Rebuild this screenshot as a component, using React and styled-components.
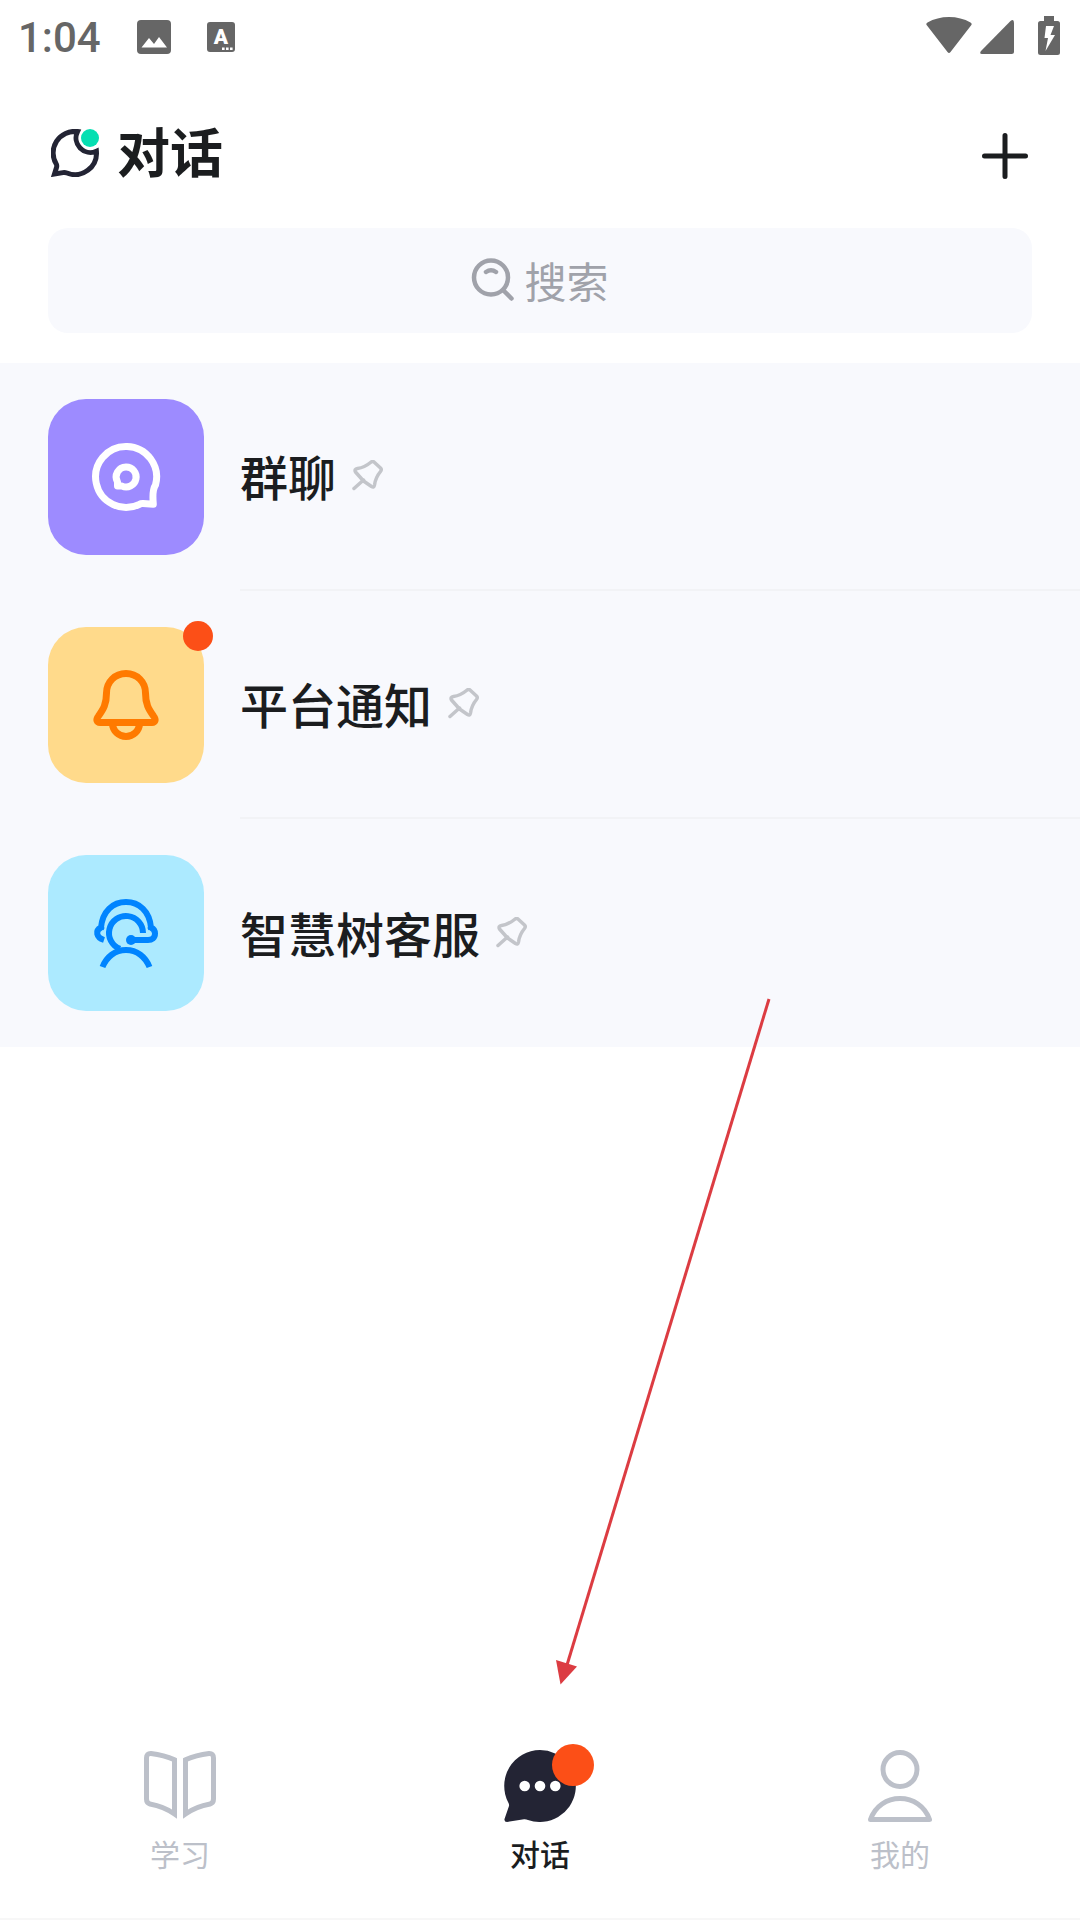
import React from "react";
import styled, { createGlobalStyle } from "styled-components";

const COLORS = {
  text: "#1b1d1f",
  navy: "#232434",
  status: "#666666",
  muted: "#a0a2aa",
  inactive: "#bcc0c9",
  panel: "#f8f9fd",
  line: "#f2f3f6",
  badge: "#fc4f17",
  teal: "#06dfb2",
  arrow: "#dc3c42",
};

const CHATS = [
  { id: "group", title: "群聊", color: "#9d8bff", icon: GroupIcon },
  { id: "notice", title: "平台通知", color: "#ffda8b", icon: BellIcon, unread: true },
  { id: "service", title: "智慧树客服", color: "#aceaff", icon: ServiceIcon },
];

const TABS = [
  { id: "study", label: "学习", icon: BookIcon },
  { id: "chat", label: "对话", icon: BubbleIcon, active: true, unread: true },
  { id: "mine", label: "我的", icon: UserIcon },
];

const App = () => {
  return (
    <Page>
      <GlobalStyle />
      <StatusBar />
      <Header>
        <LogoIcon />
        <Title>对话</Title>
        <AddButton aria-label="新建">
          <svg width="54" height="54" viewBox="0 0 54 54">
            <path
              d="M27 6.500V47.500M6.500 27H47.500"
              stroke={COLORS.text}
              strokeWidth="5"
              strokeLinecap="round"
            />
          </svg>
        </AddButton>
      </Header>
      <SearchBox>
        <SearchIcon />
        <SearchInput type="search" placeholder="搜索" aria-label="搜索" />
      </SearchBox>
      <ChatList>
        {CHATS.map(({ id, title, color, icon: Icon, unread }) => (
          <ChatRow key={id} href={`#${id}`}>
            <Tile $color={color}>
              <Icon />
              {unread && <TileBadge />}
            </Tile>
            <ChatBody>
              <ChatTitle>{title}</ChatTitle>
              <PinIcon />
            </ChatBody>
          </ChatRow>
        ))}
      </ChatList>
      <TabBar>
        {TABS.map(({ id, label, icon: Icon, active, unread }) => (
          <Tab key={id} href={`#${id}`} $active={active}>
            <TabIcon>
              <Icon />
              {unread && <TabBadge />}
            </TabIcon>
            {label}
          </Tab>
        ))}
      </TabBar>
      <Pointer width="230" height="700" viewBox="0 0 230 700" aria-hidden="true">
        <path d="M219 9L17 675" stroke={COLORS.arrow} strokeWidth="3" />
        <path d="M6 670L27 676.500L10.500 694.500Z" fill={COLORS.arrow} />
      </Pointer>
    </Page>
  );
};

function StatusBar() {
  return (
    <StatusWrapper>
      <StatusGroup $gap={36}>
        <Time>1:04</Time>
        <svg width="34" height="34" viewBox="0 0 34 34">
          <rect width="34" height="34" rx="4" fill={COLORS.status} />
          <path d="M4.500 27.500L12 18L17 24L22 17L30 27.500Z" fill="#fff" />
        </svg>
        <svg width="28" height="30" viewBox="0 0 28 30">
          <rect width="28" height="30" rx="3" fill={COLORS.status} />
          <text
            x="14"
            y="22"
            textAnchor="middle"
            fontFamily="Roboto, sans-serif"
            fontWeight="900"
            fontSize="21"
            fill="#fff"
          >
            A
          </text>
          <path d="M15 25.500h2.600v2.600h-2.600zM19 25.500h2.600v2.600h-2.600zM23 25.500h2.600v2.600h-2.600z" fill="#fff" />
        </svg>
      </StatusGroup>
      <StatusGroup $gap={24}>
        <StatusGroup $gap={8}>
          <svg width="46" height="40" viewBox="0 0 46 40">
            <path
              d="M1 8.500C0 7.500 0 6.500 1.500 5.500Q11 0 23 0T44.500 5.500C46 6.500 46 7.500 45 8.500L24.500 35Q23 37 21.500 35Z"
              fill={COLORS.status}
            />
          </svg>
          <svg width="34" height="34" viewBox="0 0 34 34">
            <path d="M30.500 1Q34-1.500 34 3V31.500Q34 34 31.500 34H2Q-1 34 1 31Z" fill={COLORS.status} />
          </svg>
        </StatusGroup>
        <svg width="22" height="42" viewBox="0 0 22 42">
          <path d="M6 0H16V5H19.500Q22 5 22 7.500V36.500Q22 39 19.500 39H2.500Q0 39 0 36.500V7.500Q0 5 2.500 5H6Z" fill={COLORS.status} />
          <path d="M8 10H16L12.500 19H17L7.500 35L10 22H6.500Z" fill="#fff" />
        </svg>
      </StatusGroup>
    </StatusWrapper>
  );
}

function LogoIcon() {
  return (
    <svg width="48" height="48" viewBox="0 0 48 48" fill="none">
      <path
        d="M26.500 2.600A21.500 21.500 0 0 0 5.500 35.500Q6 37 5.500 38.500L3.500 45L12 43.600Q14 43.300 16 44A21.500 21.500 0 0 0 45.400 22.200A14.500 14.500 0 0 1 26.500 2.600Z"
        stroke={COLORS.navy}
        strokeWidth="5"
      />
      <circle cx="39" cy="9" r="9" fill={COLORS.teal} />
    </svg>
  );
}

function SearchIcon() {
  return (
    <svg width="44" height="44" viewBox="0 0 44 44" fill="none" stroke={COLORS.muted} strokeWidth="4.500" strokeLinecap="round">
      <circle cx="20" cy="19.500" r="17" />
      <path d="M32.500 32.500L40.500 40.500M15 14Q20 10.500 25 14" />
    </svg>
  );
}

function GroupIcon() {
  return (
    <svg width="72" height="72" viewBox="0 0 72 72" fill="none" stroke="#fff" strokeWidth="7" strokeLinejoin="round">
      <path d="M49.500 63.300A30.500 30.500 0 1 1 65.500 44Q62 49 63.300 63L63.300 63.200L53 62.500Q51 62.400 49.500 63.300Z" />
      <path d="M36 26A10 10 0 1 1 32 45.100L27.500 45V41A10 10 0 0 1 36 26Z" />
    </svg>
  );
}

function BellIcon() {
  return (
    <svg width="72" height="72" viewBox="0 0 72 72" fill="none" stroke="#ff7a00" strokeWidth="7">
      <path d="M36 4.500C25 4.500 16.500 13 16.500 24C16.500 35 13.500 40 8.500 47C5.500 51 7 53.500 10 53.500H62C65 53.500 66.500 51 63.500 47C58.500 40 55.500 35 55.500 24C55.500 13 47 4.500 36 4.500Z" />
      <path d="M22.500 54C22.500 62 29 67.500 36 67.500S49.500 62 49.500 54" />
    </svg>
  );
}

function ServiceIcon() {
  return (
    <svg width="72" height="72" viewBox="0 0 72 72" fill="none" stroke="#0084ff" strokeWidth="6">
      <path d="M14 43C6 40.500 5 33.500 11 30.500C12.500 14 23 5 36 5S59.500 14 61 30.500Q65 32.500 65 36.500C65 41 62 43 58 43H40" />
      <path d="M10.500 30L14 32M61.500 30L58 32" strokeWidth="3" />
      <path d="M53 36A17 17 0 1 0 30 51.900" />
      <path d="M12.500 70C16.500 60 25 53 36 53S55.500 60 59.500 70" />
      <circle cx="41" cy="43" r="5" fill="#0084ff" stroke="none" />
    </svg>
  );
}

function PinIcon() {
  return (
    <svg width="32" height="32" viewBox="0 0 32 32" fill="none" stroke="#c3c5ca" strokeWidth="3.500" strokeLinecap="round" strokeLinejoin="round">
      <path d="M22 2L28.500 8Q30 9.500 28.500 11.500Q23.500 17.500 22.500 25Q22 28 19.500 26.500L11.500 21L3.500 12Q2 9 5.500 8.500Q12.500 7.500 18.500 2.500Q20.500 0.800 22 2Z" />
      <path d="M11.500 20L2 28.500" />
    </svg>
  );
}

function BookIcon() {
  const page = "M2.500 8Q2.500 3.300 7 3.500Q20 5 30.500 9.800V64Q20 56.500 6 54Q2.500 53 2.500 49Z";
  return (
    <svg width="72" height="72" viewBox="0 0 72 72" fill="none" stroke={COLORS.inactive} strokeWidth="5">
      <path d={page} />
      <path d={page} transform="matrix(-1 0 0 1 72 0)" />
    </svg>
  );
}

function BubbleIcon() {
  return (
    <svg width="72" height="72" viewBox="0 0 72 72" fill={COLORS.navy}>
      <path d="M36 0A36 36 0 1 1 24 70Q22 69 20 69.200L3 72Q0 72 0.500 69L5 56Q5.300 54.500 4.500 53A36 36 0 0 1 36 0Z" />
      <g fill="#fff">
        <circle cx="20.700" cy="36" r="5.300" />
        <circle cx="36" cy="36" r="5.300" />
        <circle cx="51.300" cy="36" r="5.300" />
      </g>
    </svg>
  );
}

function UserIcon() {
  return (
    <svg width="72" height="72" viewBox="0 0 72 72" fill="none" stroke={COLORS.inactive} strokeWidth="5" strokeLinejoin="round">
      <circle cx="36" cy="19.500" r="17" />
      <path d="M6.500 69.500C11 56 23 48.500 36 48.500S61 56 65.500 69.500Z" />
    </svg>
  );
}

const GlobalStyle = createGlobalStyle`
  *, *::before, *::after {
    box-sizing: border-box;
  }

  body {
    margin: 0;
    background: #fff;
    color: ${COLORS.text};
    font-family: "Noto Sans CJK SC", sans-serif;
  }

  svg {
    display: block;
    flex-shrink: 0;
  }
`;

const Page = styled.div`
  position: relative;
  display: flex;
  flex-direction: column;
  min-height: 100vh;
`;

const StatusWrapper = styled.div`
  display: flex;
  align-items: center;
  justify-content: space-between;
  height: 72px;
  padding: 2px 20px 0 18px;
`;

const StatusGroup = styled.div`
  display: flex;
  align-items: center;
  gap: ${(p) => p.$gap}px;
`;

const Time = styled.span`
  padding-top: 2px;
  font-family: Roboto, sans-serif;
  font-size: 42px;
  font-weight: 500;
  line-height: 48px;
  color: ${COLORS.status};
`;

const Header = styled.header`
  display: flex;
  align-items: center;
  height: 156px;
  padding: 6px 48px 0 51px;
`;

const Title = styled.h1`
  margin: 0 auto 0 18px;
  padding-bottom: 6px;
  font-size: 53px;
  font-weight: 700;
  line-height: 72px;
`;

const AddButton = styled.button`
  padding: 6px 0 0;
  border: 0;
  background: none;
`;

const SearchBox = styled.label`
  display: flex;
  align-items: center;
  justify-content: center;
  gap: 9px;
  height: 105px;
  margin: 0 48px 30px;
  padding-bottom: 2px;
  border-radius: 20px;
  background: ${COLORS.panel};
`;

const SearchInput = styled.input`
  appearance: none;
  field-sizing: content;
  padding: 0;
  border: 0;
  outline: 0;
  background: none;
  font: inherit;
  font-size: 42px;

  &::placeholder {
    color: ${COLORS.muted};
    opacity: 1;
  }
`;

const ChatList = styled.main`
  background: ${COLORS.panel};
`;

const ChatRow = styled.a`
  display: flex;
  align-items: center;
  gap: 36px;
  height: 228px;
  padding-left: 48px;
  color: inherit;
  text-decoration: none;
`;

const Tile = styled.div`
  position: relative;
  display: grid;
  place-items: center;
  width: 156px;
  height: 156px;
  border-radius: 38px;
  background: ${(p) => p.$color};
`;

const TileBadge = styled.span`
  position: absolute;
  top: -6px;
  right: -9px;
  width: 30px;
  height: 30px;
  border-radius: 50%;
  background: ${COLORS.badge};
`;

const ChatBody = styled.div`
  display: flex;
  flex: 1;
  align-items: center;
  gap: 16px;
  align-self: stretch;

  ${ChatRow}:not(:last-child) & {
    border-bottom: 2px solid ${COLORS.line};
  }
`;

const ChatTitle = styled.span`
  padding-bottom: 3px;
  font-size: 48px;
  font-weight: 500;
  line-height: 72px;
`;

const TabBar = styled.nav`
  display: grid;
  grid-template-columns: repeat(3, 1fr);
  margin-top: auto;
  padding-bottom: 47px;
  border-bottom: 2px solid #f7f7f7;
`;

const Tab = styled.a`
  display: flex;
  flex-direction: column;
  align-items: center;
  gap: 13px;
  font-size: 30px;
  font-weight: ${(p) => (p.$active ? 500 : 400)};
  line-height: 36px;
  color: ${(p) => (p.$active ? COLORS.text : COLORS.inactive)};
  text-decoration: none;
`;

const TabIcon = styled.span`
  position: relative;
`;

const TabBadge = styled.span`
  position: absolute;
  top: -6px;
  right: -18px;
  width: 42px;
  height: 42px;
  border-radius: 50%;
  background: ${COLORS.badge};
`;

const Pointer = styled.svg`
  position: absolute;
  top: 990px;
  left: calc(50% + 10px);
  pointer-events: none;
`;

export default App;
